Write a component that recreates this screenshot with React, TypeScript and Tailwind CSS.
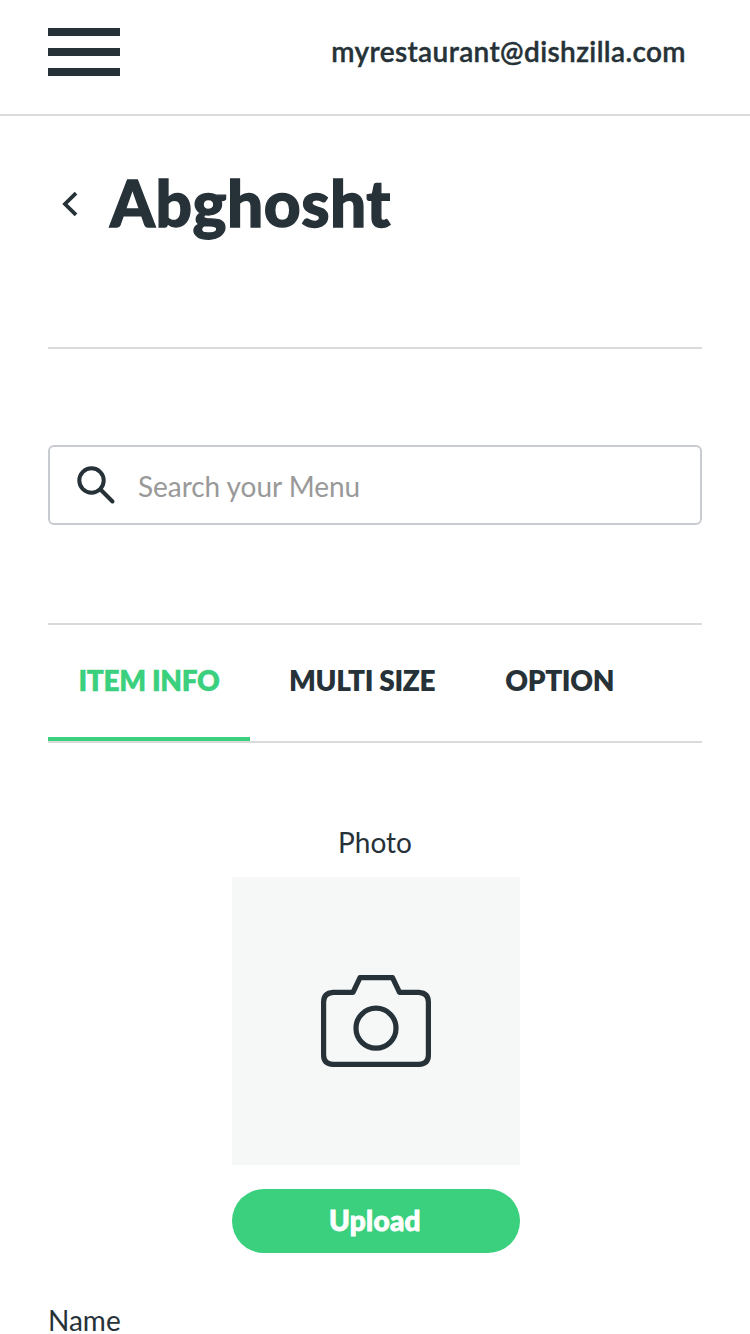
import React from "react";

const tabs = ["ITEM INFO", "MULTI SIZE", "OPTION"];

export default function App() {
  return (
    <div className="flex h-[1334px] w-[750px] flex-col overflow-hidden bg-white font-['Lato',sans-serif] text-[#263238]">
      <header className="flex h-[116px] shrink-0 items-start justify-between border-b-2 border-[#dadada] pt-7 pr-16 pl-12">
        <button className="flex w-[72px] flex-col gap-3" aria-label="Menu">
          <span className="h-2 w-full bg-[#263238]" />
          <span className="h-2 w-full bg-[#263238]" />
          <span className="h-2 w-full bg-[#263238]" />
        </button>
        <span className="pt-[2px] text-[28px] leading-[42px] font-semibold tracking-[0.38px] [-webkit-text-stroke:0.4px_#263238]">myrestaurant@dishzilla.com</span>
      </header>

      <main className="flex flex-col px-12">
        <div className="flex h-[233px] items-start border-b-2 border-[#dadada] pt-[47px]">
          <svg className="mt-[28px] ml-[14px] h-[26px] w-4 shrink-0" viewBox="0 0 16 26" fill="none" stroke="#263238" strokeWidth="3.8">
            <path d="M14 2.200 3 13l11 10.800" />
          </svg>
          <h1 className="ml-[32px] text-[64px] leading-[80px] font-black tracking-[0.5px] [-webkit-text-stroke:1.3px_#263238]">Abghosht</h1>
        </div>

        <div className="mt-24 flex h-20 items-center rounded-md border-2 border-[#c8ccd0] pl-[26px]">
          <svg className="h-10 w-10" viewBox="0 0 40 40" fill="none" stroke="#263238" strokeWidth="4" strokeLinecap="round">
            <circle cx="15.500" cy="15.500" r="12.200" />
            <path d="m24.500 24.500 12 12" />
          </svg>
          <input className="ml-[22px] w-[500px] pt-0.5 text-[28px] tracking-[-0.04px] outline-none placeholder:text-[#999]" placeholder="Search your Menu" />
        </div>

        <nav className="mt-[98px] flex h-[120px] border-y-2 border-[#dadada] text-[28px] font-extrabold tracking-[-0.35px]">
          <span className="flex w-[202px] justify-center border-b-4 border-[#3ad07d] pt-[34px] leading-[42px] text-[#3ad07d] [-webkit-text-stroke:0.3px_#3ad07d]">{tabs[0]}</span>
          <span className="ml-[39px] pt-[34px] leading-[42px]">{tabs[1]}</span>
          <span className="ml-[70px] pt-[34px] leading-[42px]">{tabs[2]}</span>
        </nav>

        <section className="mt-[78px] ml-[184px] flex w-[288px] flex-col items-center">
          <span className="mr-0.5 text-[28px] leading-[42px]">Photo</span>
          <div className="mt-[14px] flex h-[288px] w-full items-center justify-center bg-[#f6f8f8]">
            <svg className="h-[92px] w-[110px]" viewBox="0 0 110 92" fill="none" stroke="#263238" strokeWidth="5.2" strokeLinejoin="round">
              <path d="M12 17.300H32L39 2.700H71.500L78.500 17.300H98Q107.400 18 107.400 27V80Q107.400 89 98 89.300H12Q2.600 89 2.600 80V27Q2.600 18 12 17.300Z" />
              <circle cx="55" cy="53.200" r="20" />
            </svg>
          </div>
          <button className="mt-6 h-16 w-full rounded-full bg-[#3ad07d] pr-0.5 pb-0.5 text-[28px] font-black tracking-[0.3px] text-white [-webkit-text-stroke:0.9px_white]">Upload</button>
        </section>

        <label className="mt-[46px] text-[28px] leading-[42px]">Name</label>
      </main>
    </div>
  );
}
